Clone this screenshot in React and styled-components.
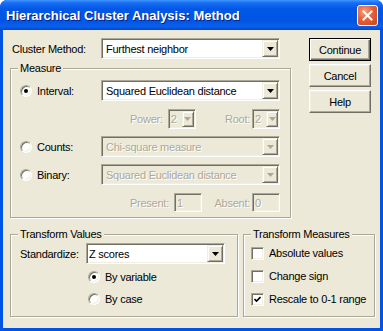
import React from "react";
import styled, { createGlobalStyle, css } from "styled-components";

const GlobalStyle = createGlobalStyle`
  html, body {
    margin: 0;
    padding: 0;
    background: #ffffff;
  }
  body {
    font-family: "Liberation Sans", Arial, sans-serif;
    font-size: 11px;
    letter-spacing: -0.25px;
    color: #000;
  }
`;

const Window = styled.div`
  width: 383px;
  height: 331px;
  display: flex;
  flex-direction: column;
  background: #0054e3;
  border-radius: 7px 7px 0 0;
  overflow: hidden;
`;

const TitleBar = styled.div`
  height: 30px;
  flex-shrink: 0;
  display: flex;
  align-items: center;
  justify-content: space-between;
  padding: 0 5px 0 6px;
  background: linear-gradient(
    to bottom,
    #3d95ff 0%,
    #1a6cf2 10%,
    #0058e6 30%,
    #0055e4 70%,
    #0a5fea 88%,
    #0047cf 100%
  );
`;

const Title = styled.span`
  font-family: "Liberation Sans", Arial, sans-serif;
  font-weight: bold;
  font-size: 13px;
  color: #fff;
  text-shadow: 1px 1px #0a1e80;
  letter-spacing: 0;
`;

const CloseButton = styled.div`
  width: 21px;
  height: 21px;
  box-sizing: border-box;
  border: 1px solid #fff;
  border-radius: 3px;
  background: radial-gradient(circle at 35% 30%, #f4a383 0%, #e2623c 45%, #c9431b 100%);
  display: flex;
  align-items: center;
  justify-content: center;
`;

const Frame = styled.div`
  flex: 1;
  margin: 0 3px 3px;
  background: #ece9d8;
  padding: 8px 0 0 7px;
  display: flex;
  flex-direction: column;
`;

const TopArea = styled.div`
  display: flex;
  align-items: flex-start;
`;

const LeftColumn = styled.div`
  width: 281px;
  display: flex;
  flex-direction: column;
`;

const ButtonColumn = styled.div`
  margin-left: 18px;
  display: flex;
  flex-direction: column;
  gap: 3px;
`;

const PushButton = styled.div`
  box-sizing: border-box;
  width: 62px;
  height: 23px;
  display: flex;
  align-items: center;
  justify-content: center;
  background: #ece9d8;
  border: 1px solid;
  border-color: #ffffff #716f64 #716f64 #ffffff;
  box-shadow: inset -1px -1px #aca899, inset 1px 1px #f1efe2;
  ${(p) =>
    p.$default &&
    css`
      border-color: #000;
      box-shadow: inset 1px 1px #fff, inset -1px -1px #716f64, inset -2px -2px #aca899;
    `}
`;

const FieldRow = styled.div`
  display: flex;
  align-items: center;
  height: ${(p) => p.$h || 21}px;
  padding-left: ${(p) => p.$indent || 0}px;
  white-space: nowrap;
`;

const FieldLabel = styled.span`
  width: ${(p) => (p.$w ? `${p.$w}px` : "auto")};
  margin-left: ${(p) => p.$ml || 0}px;
  margin-right: ${(p) => p.$gap || 0}px;
  flex-shrink: 0;
  white-space: nowrap;
  ${(p) =>
    p.$disabled &&
    css`
      color: #aca899;
      text-shadow: 1px 1px #ffffff;
    `}
`;

const Spacer = styled.div`
  flex: 1;
`;

const ComboBox = styled.div`
  box-sizing: border-box;
  width: ${(p) => p.$w}px;
  height: ${(p) => p.$h || 21}px;
  flex-shrink: 0;
  display: flex;
  align-items: stretch;
  padding: 1px;
  border: 1px solid;
  border-color: #aca899 #ffffff #ffffff #aca899;
  box-shadow: inset 1px 1px #716f64, inset -1px -1px #f1efe2;
  background: ${(p) => (p.$disabled ? "#ece9d8" : "#ffffff")};
`;

const ComboText = styled.div`
  flex: 1;
  display: flex;
  align-items: center;
  padding-left: ${(p) => (p.$pad != null ? p.$pad : 3)}px;
  white-space: nowrap;
  overflow: hidden;
  ${(p) =>
    p.$disabled &&
    css`
      color: #aca899;
      text-shadow: 1px 1px #ffffff;
    `}
`;

const ArrowButton = styled.div`
  box-sizing: border-box;
  width: ${(p) => p.$w || 16}px;
  flex-shrink: 0;
  display: flex;
  align-items: center;
  justify-content: center;
  background: #ece9d8;
  border: 1px solid;
  border-color: #f1efe2 #716f64 #716f64 #f1efe2;
  box-shadow: inset 1px 1px #ffffff, inset -1px -1px #aca899;
`;

const GroupBox = styled.div`
  position: relative;
  box-sizing: border-box;
  width: ${(p) => (p.$w ? `${p.$w}px` : "auto")};
  height: ${(p) => (p.$h ? `${p.$h}px` : "auto")};
  margin-top: ${(p) => p.$mt || 0}px;
  padding: ${(p) => p.$pad};
  border: 1px solid #aca899;
  box-shadow: inset 1px 1px #ffffff, 1px 1px #ffffff;
  display: flex;
  flex-direction: column;
  gap: ${(p) => p.$gap || 0}px;
`;

const Legend = styled.span`
  position: absolute;
  top: -7px;
  left: ${(p) => p.$left || 7}px;
  padding: 0 2px;
  line-height: 13px;
  background: #ece9d8;
  white-space: nowrap;
`;

const OptionCell = styled.div`
  width: ${(p) => p.$w || 81}px;
  flex-shrink: 0;
  display: flex;
  align-items: center;
  margin-left: ${(p) => p.$ml || 0}px;
`;

const RadioCircle = styled.span`
  box-sizing: border-box;
  width: 12px;
  height: 12px;
  flex-shrink: 0;
  border-radius: 50%;
  border: 1px solid;
  border-color: #aca899 #ffffff #ffffff #aca899;
  box-shadow: inset 1px 1px #716f64, inset -1px -1px #f1efe2;
  background: #ffffff;
  display: flex;
  align-items: center;
  justify-content: center;
  margin-right: 5px;
  &::after {
    content: "";
    display: ${(p) => (p.$checked ? "block" : "none")};
    width: 4px;
    height: 4px;
    border-radius: 50%;
    background: #000;
  }
`;

const CheckSquare = styled.span`
  box-sizing: border-box;
  width: 13px;
  height: 13px;
  flex-shrink: 0;
  border: 1px solid;
  border-color: #aca899 #ffffff #ffffff #aca899;
  box-shadow: inset 1px 1px #716f64, inset -1px -1px #f1efe2;
  background: #ffffff;
  display: flex;
  align-items: center;
  justify-content: center;
  margin-right: 5px;
`;

const BottomArea = styled.div`
  display: flex;
  gap: 5px;
  margin-top: 16px;
`;

const ListColumn = styled.div`
  display: flex;
  flex-direction: column;
  gap: ${(p) => p.$gap || 0}px;
  margin-top: ${(p) => p.$mt || 0}px;
`;

const DownArrow = ({ disabled }) => (
  <svg width="7" height="4" viewBox="0 0 7 4">
    <polygon points="0,0 7,0 3.5,4" fill={disabled ? "#aca899" : "#000"} />
  </svg>
);

const Combo = ({ value, w, h, disabled, pad, arrowW }) => (
  <ComboBox $w={w} $h={h} $disabled={disabled}>
    <ComboText $pad={pad} $disabled={disabled}>
      {value}
    </ComboText>
    <ArrowButton $w={arrowW}>
      <DownArrow disabled={disabled} />
    </ArrowButton>
  </ComboBox>
);

const Radio = ({ label, checked, ...rest }) => (
  <OptionCell {...rest}>
    <RadioCircle $checked={checked} />
    <span>{label}</span>
  </OptionCell>
);

const Check = ({ label, checked }) => (
  <FieldRow $h={20}>
    <CheckSquare>
      {checked && (
        <svg width="7" height="7" viewBox="0 0 7 7">
          <polyline points="0.5,3 2.5,5 6.5,1" fill="none" stroke="#000" strokeWidth="1.6" />
        </svg>
      )}
    </CheckSquare>
    <span>{label}</span>
  </FieldRow>
);

export default function App() {
  return (
    <>
      <GlobalStyle />
      <Window>
        <TitleBar>
          <Title>Hierarchical Cluster Analysis: Method</Title>
          <CloseButton>
            <svg width="11" height="11" viewBox="0 0 11 11">
              <path d="M1.5 1.5 L9.5 9.5 M9.5 1.5 L1.5 9.5" stroke="#fff" strokeWidth="2" strokeLinecap="square" />
            </svg>
          </CloseButton>
        </TitleBar>
        <Frame>
          <TopArea>
            <LeftColumn>
              <FieldRow $indent={2}>
                <FieldLabel $w={89}>Cluster Method:</FieldLabel>
                <Combo value="Furthest neighbor" w={179} />
              </FieldRow>
              <GroupBox $mt={9} $pad="11px 10px 4px 9px" $gap={7}>
                <Legend>Measure</Legend>
                <FieldRow>
                  <Radio label="Interval:" checked />
                  <Combo value="Squared Euclidean distance" w={179} />
                </FieldRow>
                <FieldRow>
                  <FieldLabel $disabled $gap={5} $ml={110}>
                    Power:
                  </FieldLabel>
                  <Combo value="2" w={28} h={20} disabled pad={1} arrowW={12} />
                  <Spacer />
                  <FieldLabel $disabled $gap={2}>
                    Root:
                  </FieldLabel>
                  <Combo value="2" w={28} h={20} disabled pad={1} arrowW={12} />
                </FieldRow>
                <FieldRow>
                  <Radio label="Counts:" />
                  <Combo value="Chi-square measure" w={179} disabled />
                </FieldRow>
                <FieldRow>
                  <Radio label="Binary:" />
                  <Combo value="Squared Euclidean distance" w={179} disabled />
                </FieldRow>
                <FieldRow>
                  <FieldLabel $disabled $gap={5} $ml={110}>
                    Present:
                  </FieldLabel>
                  <ComboBox $w={28} $h={19} $disabled>
                    <ComboText $pad={1} $disabled>1</ComboText>
                  </ComboBox>
                  <Spacer />
                  <FieldLabel $disabled $gap={2}>
                    Absent:
                  </FieldLabel>
                  <ComboBox $w={28} $h={19} $disabled>
                    <ComboText $pad={1} $disabled>0</ComboText>
                  </ComboBox>
                </FieldRow>
              </GroupBox>
            </LeftColumn>
            <ButtonColumn>
              <PushButton $default>Continue</PushButton>
              <PushButton>Cancel</PushButton>
              <PushButton>Help</PushButton>
            </ButtonColumn>
          </TopArea>
          <BottomArea>
            <GroupBox $w={228} $h={83} $pad="8px 9px 0 9px">
              <Legend>Transform Values</Legend>
              <FieldRow>
                <FieldLabel $w={66}>Standardize:</FieldLabel>
                <Combo value="Z scores" w={139} pad={1} />
              </FieldRow>
              <ListColumn $gap={2} $mt={3}>
                <FieldRow $h={20}>
                  <Radio label="By variable" checked $ml={68} $w={120} />
                </FieldRow>
                <FieldRow $h={20}>
                  <Radio label="By case" $ml={68} $w={120} />
                </FieldRow>
              </ListColumn>
            </GroupBox>
            <GroupBox $w={132} $h={83} $pad="8px 6px 0 7px" $gap={3}>
              <Legend>Transform Measures</Legend>
              <Check label="Absolute values" />
              <Check label="Change sign" />
              <Check label="Rescale to 0-1 range" checked />
            </GroupBox>
          </BottomArea>
        </Frame>
      </Window>
    </>
  );
}
